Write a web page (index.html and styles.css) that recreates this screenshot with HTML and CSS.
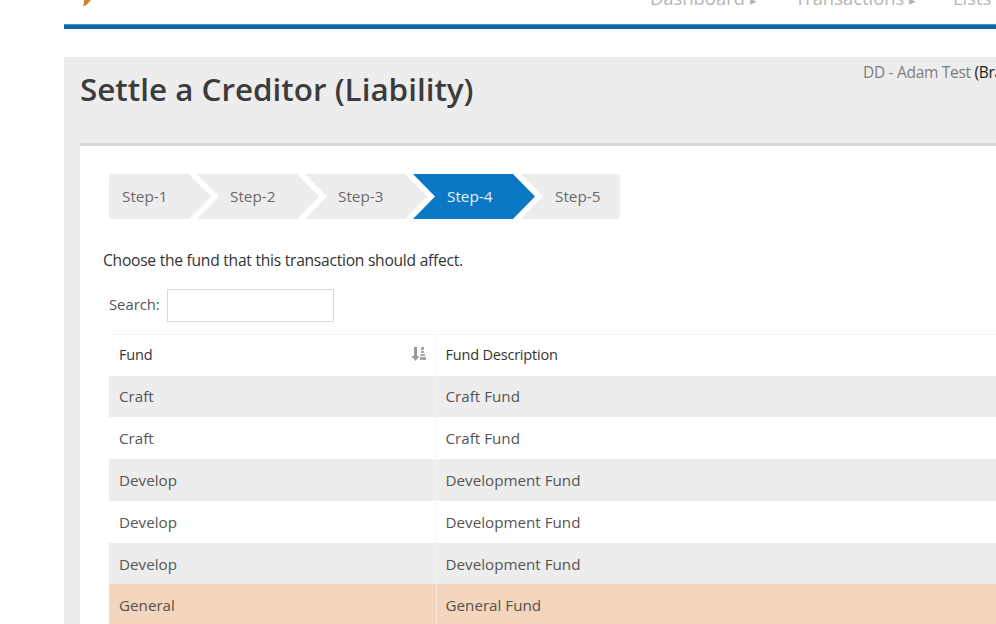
FILE: index.html
```html
<!DOCTYPE html>
<html lang="en">
<head>
<meta charset="utf-8">
<title>Settle a Creditor (Liability)</title>
<link rel="stylesheet" href="styles.css">
</head>
<body>
<div class="page">
  <header class="topbar">
    <svg class="logo" width="12" height="6" viewBox="0 0 12 6"><path d="M4 0h7L6 5.500H2.500L4 3.500z" fill="#c9852f"/></svg>
    <nav class="nav">
      <span class="nav-item nav-dash">Dashboard <span class="caret">▸</span></span>
      <span class="nav-item nav-trans">Transactions <span class="caret">▸</span></span>
      <span class="nav-item">Lists</span>
    </nav>
  </header>
  <div class="rule"></div>
  <main class="panel">
    <div class="panel-head">
      <h1 class="title">Settle a Creditor (Liability)</h1>
      <div class="user">DD - Adam Test <span class="branch">(Branch)</span></div>
    </div>
    <section class="card">
      <ol class="steps">
        <li class="step step-first">Step-1</li>
        <li class="step">Step-2</li>
        <li class="step">Step-3</li>
        <li class="step step-active">Step-4</li>
        <li class="step step-last">Step-5</li>
      </ol>
      <p class="lead">Choose the fund that this transaction should affect.</p>
      <label class="search">Search: <input class="search-input" type="text"></label>
      <table class="grid">
        <thead>
          <tr>
            <th class="col-fund"><span class="th-inner">Fund
              <svg class="sort" width="16" height="14" viewBox="0 0 16 14"><path d="M3 0h3v9h2.500L4.500 14 .5 9H3z" fill="#9a9a9a"/><path d="M10 0h3v3h-3zM10 4h3v2h-3zM9.500 7h4.500v2H9.500zM9 10h6v3H9z" fill="#a5a5a5"/></svg>
            </span></th>
            <th>Fund Description</th>
          </tr>
        </thead>
        <tbody>
          <tr class="odd"><td>Craft</td><td>Craft Fund</td></tr>
          <tr><td>Craft</td><td>Craft Fund</td></tr>
          <tr class="odd"><td>Develop</td><td>Development Fund</td></tr>
          <tr><td>Develop</td><td>Development Fund</td></tr>
          <tr class="odd"><td>Develop</td><td>Development Fund</td></tr>
          <tr class="selected"><td>General</td><td>General Fund</td></tr>
        </tbody>
      </table>
    </section>
  </main>
</div>
</body>
</html>
```
FILE: styles.css
```css
* { box-sizing: border-box; }
html, body { margin: 0; padding: 0; background: #fff; }
body { font-family: "Open Sans", "Liberation Sans", sans-serif; color: #444; }
.page { width: 996px; height: 624px; overflow: hidden; }

.topbar { height: 24px; margin-left: 64px; width: 1100px; display: flex; overflow: hidden; }
.logo { margin-left: 16px; flex: none; }
.nav { display: flex; margin-left: 558px; margin-top: -14px; font-size: 18.400px; line-height: 24px; color: #b5b5b5; white-space: nowrap; height: 24px; }
.nav-dash { width: 145px; }
.nav-trans { width: 158px; }
.caret { font-size: 13px; }

.rule { margin-left: 64px; width: 1100px; height: 5px; background: #15659f; border-top: 1px solid #2b9ad0; }

.panel { margin: 28px 0 0 64px; width: 1100px; background: #eeedee; padding: 0 0 0 16px; }
.panel-head { display: flex; height: 86px; }
.title { flex: 0 0 783px; margin: 0; padding-top: 11px; font-size: 31.400px; line-height: 42px; font-weight: 600; color: #3c3c3c; }
.user { padding-top: 5px; font-size: 15.500px; line-height: 20px; color: #7d7d7d; white-space: nowrap; letter-spacing: -.3px; }
.branch { color: #222; }

.card { background: #fff; border-top: 3px solid #d6d6da; padding: 28px 0 0 29px; min-height: 500px; }

.steps { list-style: none; margin: 0; padding: 0; display: flex; height: 45px; }
.step { width: 122px; height: 45px; margin-left: -14px; padding-left: 33px; background: #eeedee; color: #6a6a6a; font-size: 15.300px; line-height: 45px; clip-path: polygon(0 0, 100px 0, 122px 50%, 100px 100%, 0 100%, 22px 50%); }
.step-first { width: 102px; margin-left: 0; padding-left: 13px; border-radius: 4px 0 0 4px; clip-path: polygon(0 0, 80px 0, 102px 50%, 80px 100%, 0 100%); }
.step-active { background: #0a78c4; color: #e8f3fa; padding-left: 34px; }
.step-last { width: 99px; padding-left: 34px; border-radius: 0 4px 4px 0; clip-path: polygon(0 0, 100% 0, 100% 100%, 0 100%, 22px 50%); }

.lead { margin: 31px 0 0 -6px; font-size: 15.600px; line-height: 20px; color: #333; letter-spacing: -.25px; }
.search { display: flex; align-items: flex-start; gap: 7px; margin-top: 19px; font-size: 14.800px; line-height: 30px; color: #555; }
.search-input { width: 167px; height: 33px; padding: 0 6px; border: 1px solid #d9d9d9; background: #fff; }

.grid { margin-top: 12px; width: 1000px; border-collapse: collapse; table-layout: fixed; font-size: 15.200px; }
.grid th, .grid td { height: 41.800px; padding: 0 9px; text-align: left; border-right: 1px solid #f5f5f5; font-weight: 400; color: #555; }
.grid th:first-child, .grid td:first-child { padding-left: 10px; }
.grid th { height: 41px; padding-bottom: 2px; font-size: 14.500px; color: #333; border-top: 1px solid #f5f5f5; letter-spacing: -.2px; }
.col-fund { width: 327px; }
.th-inner { display: flex; justify-content: space-between; align-items: center; }
.sort { margin-right: 0; }
.odd td { background: #eeedee; }
.selected td { background: #f3d6bd; color: #5a5046; border-right-color: #f8e6d6; }
```
